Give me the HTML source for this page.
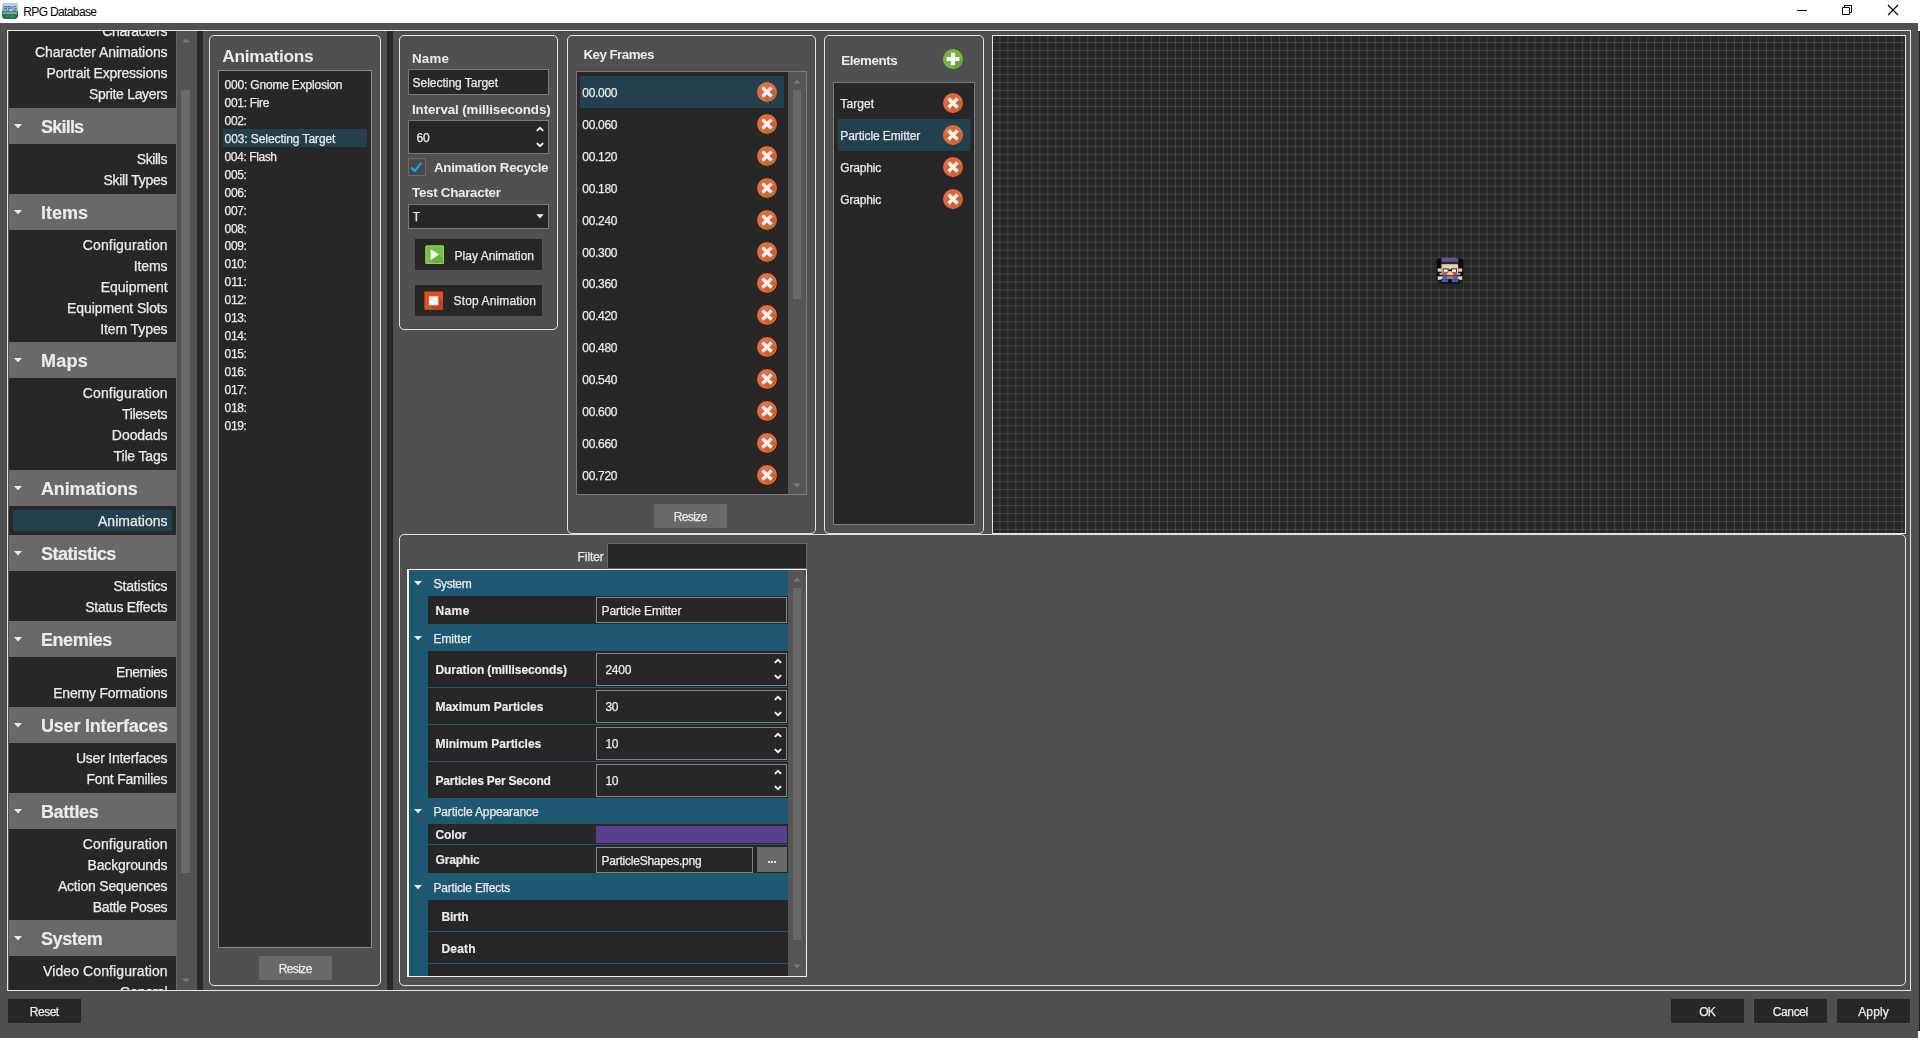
<!DOCTYPE html>
<html><head><meta charset="utf-8"><title>RPG Database</title>
<style>
html,body{margin:0;padding:0}
body{width:1920px;height:1038px;position:relative;overflow:hidden;background:#505050;font-family:"Liberation Sans",sans-serif;color:#f0f0f0}
div,svg{position:absolute}
svg{overflow:visible}
#app div{-webkit-text-stroke:0.25px}
</style></head><body>
<div style="left:0px;top:0px;width:1920px;height:23px;background:#fff"></div>
<div style="left:1918px;top:23px;width:2px;height:8px;background:#fff"></div>
<div style="left:1918px;top:31px;width:1px;height:1000px;background:#474747"></div>
<div style="left:1919px;top:31px;width:1px;height:1000px;background:#222"></div>
<div style="left:1918px;top:1031px;width:2px;height:7px;background:#fff"></div>
<svg style="left:2px;top:3px" width="16" height="16" viewBox="0 0 16 16">
<path d="M2 0H14L16 2V14L14 16H2L0 14V2Z" fill="#1c7a3c"/>
<path d="M2 0H14L16 2V8H0V2Z" fill="#a9d6d4"/>
<rect x="1" y="8.6" width="14" height="2.6" fill="#8a9aa8"/>
<rect x="4" y="12.6" width="3" height="1" fill="#5fa574"/><rect x="8.5" y="12.6" width="3.5" height="1" fill="#5fa574"/>
<text x="8" y="7.5" font-family="Liberation Sans, sans-serif" font-weight="bold" font-size="8" text-anchor="middle" fill="#5560c4" textLength="13.4" lengthAdjust="spacingAndGlyphs">RPG</text>
</svg>
<div style="top:5.74px;font-size:12px;line-height:12px;letter-spacing:-0.642px;color:#000;white-space:nowrap;left:23.30px;">RPG Database</div>
<svg style="left:1789px;top:0" width="128" height="23" viewBox="0 0 128 23">
<path d="M8 10.5H18" stroke="#000" stroke-width="1" fill="none"/>
<path d="M53.5 7.5H60.5V14.5H53.5Z M55.5 7.5V5.5H62.5V12.5H60.5" stroke="#000" stroke-width="1" fill="none"/>
<path d="M99 5L109 15M109 5L99 15" stroke="#000" stroke-width="1.1" fill="none"/>
</svg>
<div id="app" style="left:0;top:0;width:1920px;height:1038px;will-change:transform">
<div style="left:7px;top:30px;width:1904px;height:961px;border:1px solid #e4e4e4;box-sizing:border-box"></div>
<div style="left:9px;top:31px;width:167px;height:959px;background:#272727"></div>
<div style="left:176px;top:31px;width:21px;height:959px;background:#535353"></div>
<div style="left:176px;top:31px;width:1px;height:959px;background:#666"></div>
<div style="left:181px;top:90px;width:9px;height:783px;background:#696969"></div>
<svg style="left:182px;top:38px" width="8" height="5" viewBox="0 0 8 5"><path d="M0 4.5L4 0.5L8 4.5Z" fill="#777"/></svg>
<svg style="left:182px;top:978px" width="8" height="5" viewBox="0 0 8 5"><path d="M0 0.5L4 4.5L8 0.5Z" fill="#777"/></svg>
<div style="left:197px;top:31px;width:6px;height:959px;background:#292929"></div>
<div style="left:387px;top:31px;width:5.5px;height:959px;background:#292929"></div>
<div style="left:9px;top:31px;width:167px;height:959px;overflow:hidden">
<div style="left:0;top:77px;width:167px;height:36px;background:#696969"></div>
<svg style="left:5px;top:93px" width="8" height="5" viewBox="0 0 8 5"><path d="M0 0H8L4 4.4Z" fill="#ececec"/></svg>
<div style="left:0;top:163px;width:167px;height:36px;background:#696969"></div>
<svg style="left:5px;top:179px" width="8" height="5" viewBox="0 0 8 5"><path d="M0 0H8L4 4.4Z" fill="#ececec"/></svg>
<div style="left:0;top:311px;width:167px;height:36px;background:#696969"></div>
<svg style="left:5px;top:327px" width="8" height="5" viewBox="0 0 8 5"><path d="M0 0H8L4 4.4Z" fill="#ececec"/></svg>
<div style="left:0;top:439px;width:167px;height:36px;background:#696969"></div>
<svg style="left:5px;top:455px" width="8" height="5" viewBox="0 0 8 5"><path d="M0 0H8L4 4.4Z" fill="#ececec"/></svg>
<div style="left:0;top:504px;width:167px;height:36px;background:#696969"></div>
<svg style="left:5px;top:520px" width="8" height="5" viewBox="0 0 8 5"><path d="M0 0H8L4 4.4Z" fill="#ececec"/></svg>
<div style="left:0;top:590px;width:167px;height:36px;background:#696969"></div>
<svg style="left:5px;top:606px" width="8" height="5" viewBox="0 0 8 5"><path d="M0 0H8L4 4.4Z" fill="#ececec"/></svg>
<div style="left:0;top:676px;width:167px;height:36px;background:#696969"></div>
<svg style="left:5px;top:692px" width="8" height="5" viewBox="0 0 8 5"><path d="M0 0H8L4 4.4Z" fill="#ececec"/></svg>
<div style="left:0;top:762px;width:167px;height:36px;background:#696969"></div>
<svg style="left:5px;top:778px" width="8" height="5" viewBox="0 0 8 5"><path d="M0 0H8L4 4.4Z" fill="#ececec"/></svg>
<div style="left:0;top:889px;width:167px;height:36px;background:#696969"></div>
<svg style="left:5px;top:905px" width="8" height="5" viewBox="0 0 8 5"><path d="M0 0H8L4 4.4Z" fill="#ececec"/></svg>
<div style="left:4px;top:479px;width:159px;height:21px;background:#23404e"></div>
</div>
<div style="left:0;top:31px;width:1920px;height:959px;overflow:hidden"><div style="left:0;top:-31px;width:1920px;height:1038px">
<div style="top:24.25px;font-size:14px;line-height:14px;letter-spacing:-0.344px;color:#ececec;white-space:nowrap;right:1752.74px;">Characters</div>
<div style="top:45.25px;font-size:14px;line-height:14px;letter-spacing:-0.062px;color:#ececec;white-space:nowrap;right:1752.46px;">Character Animations</div>
<div style="top:66.15px;font-size:14px;line-height:14px;letter-spacing:-0.220px;color:#ececec;white-space:nowrap;right:1752.62px;">Portrait Expressions</div>
<div style="top:87.25px;font-size:14px;line-height:14px;letter-spacing:-0.314px;color:#ececec;white-space:nowrap;right:1752.71px;">Sprite Layers</div>
<div style="top:117.66px;font-size:18px;line-height:18px;letter-spacing:-0.779px;color:#ececec;white-space:nowrap;font-weight:bold;-webkit-text-stroke:0.15px;left:41.00px;">Skills</div>
<div style="top:151.85px;font-size:14px;line-height:14px;letter-spacing:-0.361px;color:#ececec;white-space:nowrap;right:1752.76px;">Skills</div>
<div style="top:172.95px;font-size:14px;line-height:14px;letter-spacing:-0.244px;color:#ececec;white-space:nowrap;right:1752.64px;">Skill Types</div>
<div style="top:203.66px;font-size:18px;line-height:18px;letter-spacing:-0.026px;color:#ececec;white-space:nowrap;font-weight:bold;-webkit-text-stroke:0.15px;left:41.00px;">Items</div>
<div style="top:237.95px;font-size:14px;line-height:14px;letter-spacing:0.127px;color:#ececec;white-space:nowrap;right:1752.27px;">Configuration</div>
<div style="top:258.85px;font-size:14px;line-height:14px;letter-spacing:-0.092px;color:#ececec;white-space:nowrap;right:1752.49px;">Items</div>
<div style="top:279.75px;font-size:14px;line-height:14px;letter-spacing:-0.009px;color:#ececec;white-space:nowrap;right:1752.41px;">Equipment</div>
<div style="top:300.65px;font-size:14px;line-height:14px;letter-spacing:-0.103px;color:#ececec;white-space:nowrap;right:1752.50px;">Equipment Slots</div>
<div style="top:321.55px;font-size:14px;line-height:14px;letter-spacing:-0.098px;color:#ececec;white-space:nowrap;right:1752.50px;">Item Types</div>
<div style="top:352.16px;font-size:18px;line-height:18px;letter-spacing:0.253px;color:#ececec;white-space:nowrap;font-weight:bold;-webkit-text-stroke:0.15px;left:41.00px;">Maps</div>
<div style="top:386.45px;font-size:14px;line-height:14px;letter-spacing:0.127px;color:#ececec;white-space:nowrap;right:1752.27px;">Configuration</div>
<div style="top:407.35px;font-size:14px;line-height:14px;letter-spacing:-0.292px;color:#ececec;white-space:nowrap;right:1752.69px;">Tilesets</div>
<div style="top:428.25px;font-size:14px;line-height:14px;letter-spacing:-0.042px;color:#ececec;white-space:nowrap;right:1752.44px;">Doodads</div>
<div style="top:449.15px;font-size:14px;line-height:14px;letter-spacing:-0.150px;color:#ececec;white-space:nowrap;right:1752.55px;">Tile Tags</div>
<div style="top:480.16px;font-size:18px;line-height:18px;letter-spacing:-0.125px;color:#ececec;white-space:nowrap;font-weight:bold;-webkit-text-stroke:0.15px;left:41.00px;">Animations</div>
<div style="top:514.25px;font-size:14px;line-height:14px;letter-spacing:0.042px;color:#ececec;white-space:nowrap;right:1752.36px;">Animations</div>
<div style="top:544.66px;font-size:18px;line-height:18px;letter-spacing:-0.517px;color:#ececec;white-space:nowrap;font-weight:bold;-webkit-text-stroke:0.15px;left:41.00px;">Statistics</div>
<div style="top:579.15px;font-size:14px;line-height:14px;letter-spacing:-0.210px;color:#ececec;white-space:nowrap;right:1752.61px;">Statistics</div>
<div style="top:600.05px;font-size:14px;line-height:14px;letter-spacing:-0.291px;color:#ececec;white-space:nowrap;right:1752.69px;">Status Effects</div>
<div style="top:631.06px;font-size:18px;line-height:18px;letter-spacing:-0.460px;color:#ececec;white-space:nowrap;font-weight:bold;-webkit-text-stroke:0.15px;left:41.00px;">Enemies</div>
<div style="top:665.05px;font-size:14px;line-height:14px;letter-spacing:-0.495px;color:#ececec;white-space:nowrap;right:1752.90px;">Enemies</div>
<div style="top:685.95px;font-size:14px;line-height:14px;letter-spacing:-0.207px;color:#ececec;white-space:nowrap;right:1752.61px;">Enemy Formations</div>
<div style="top:716.96px;font-size:18px;line-height:18px;letter-spacing:-0.212px;color:#ececec;white-space:nowrap;font-weight:bold;-webkit-text-stroke:0.15px;left:41.00px;">User Interfaces</div>
<div style="top:750.95px;font-size:14px;line-height:14px;letter-spacing:-0.236px;color:#ececec;white-space:nowrap;right:1752.64px;">User Interfaces</div>
<div style="top:771.85px;font-size:14px;line-height:14px;letter-spacing:-0.237px;color:#ececec;white-space:nowrap;right:1752.64px;">Font Families</div>
<div style="top:802.86px;font-size:18px;line-height:18px;letter-spacing:-0.386px;color:#ececec;white-space:nowrap;font-weight:bold;-webkit-text-stroke:0.15px;left:41.00px;">Battles</div>
<div style="top:836.85px;font-size:14px;line-height:14px;letter-spacing:0.127px;color:#ececec;white-space:nowrap;right:1752.27px;">Configuration</div>
<div style="top:857.75px;font-size:14px;line-height:14px;letter-spacing:-0.169px;color:#ececec;white-space:nowrap;right:1752.57px;">Backgrounds</div>
<div style="top:878.65px;font-size:14px;line-height:14px;letter-spacing:-0.214px;color:#ececec;white-space:nowrap;right:1752.61px;">Action Sequences</div>
<div style="top:899.55px;font-size:14px;line-height:14px;letter-spacing:-0.348px;color:#ececec;white-space:nowrap;right:1752.75px;">Battle Poses</div>
<div style="top:929.86px;font-size:18px;line-height:18px;letter-spacing:-0.439px;color:#ececec;white-space:nowrap;font-weight:bold;-webkit-text-stroke:0.15px;left:41.00px;">System</div>
<div style="top:964.05px;font-size:14px;line-height:14px;letter-spacing:0.101px;color:#ececec;white-space:nowrap;right:1752.30px;">Video Configuration</div>
<div style="top:984.95px;font-size:14px;line-height:14px;letter-spacing:-0.324px;color:#ececec;white-space:nowrap;right:1752.72px;">General</div>
</div></div>
<div style="left:209px;top:35px;width:172px;height:951px;border:1px solid #e4e4e4;border-radius:5px;box-sizing:border-box"></div>
<div style="top:48.23px;font-size:17.33px;line-height:17.33px;letter-spacing:-0.336px;color:#ececec;white-space:nowrap;font-weight:bold;-webkit-text-stroke:0;left:222.30px;">Animations</div>
<div style="left:218px;top:70px;width:154px;height:878px;background:#272727;border:1px solid #8a8a8a;box-sizing:border-box"></div>
<div style="left:223px;top:129px;width:144px;height:18px;background:#23404e"></div>
<div style="top:78.94px;font-size:12px;line-height:12px;letter-spacing:-0.191px;color:#ececec;white-space:nowrap;left:224.60px;">000: Gnome Explosion</div>
<div style="top:96.89px;font-size:12px;line-height:12px;letter-spacing:-0.317px;color:#ececec;white-space:nowrap;left:224.60px;">001: Fire</div>
<div style="top:114.84px;font-size:12px;line-height:12px;letter-spacing:-0.337px;color:#ececec;white-space:nowrap;left:224.60px;">002:</div>
<div style="top:132.79px;font-size:12px;line-height:12px;letter-spacing:-0.086px;color:#ececec;white-space:nowrap;left:224.60px;">003: Selecting Target</div>
<div style="top:150.74px;font-size:12px;line-height:12px;letter-spacing:-0.400px;color:#ececec;white-space:nowrap;left:224.60px;">004: Flash</div>
<div style="top:168.69px;font-size:12px;line-height:12px;letter-spacing:-0.337px;color:#ececec;white-space:nowrap;left:224.60px;">005:</div>
<div style="top:186.64px;font-size:12px;line-height:12px;letter-spacing:-0.337px;color:#ececec;white-space:nowrap;left:224.60px;">006:</div>
<div style="top:204.59px;font-size:12px;line-height:12px;letter-spacing:-0.337px;color:#ececec;white-space:nowrap;left:224.60px;">007:</div>
<div style="top:222.54px;font-size:12px;line-height:12px;letter-spacing:-0.337px;color:#ececec;white-space:nowrap;left:224.60px;">008:</div>
<div style="top:240.49px;font-size:12px;line-height:12px;letter-spacing:-0.337px;color:#ececec;white-space:nowrap;left:224.60px;">009:</div>
<div style="top:258.44px;font-size:12px;line-height:12px;letter-spacing:-0.337px;color:#ececec;white-space:nowrap;left:224.60px;">010:</div>
<div style="top:276.39px;font-size:12px;line-height:12px;letter-spacing:-0.114px;color:#ececec;white-space:nowrap;left:224.60px;">011:</div>
<div style="top:294.34px;font-size:12px;line-height:12px;letter-spacing:-0.337px;color:#ececec;white-space:nowrap;left:224.60px;">012:</div>
<div style="top:312.29px;font-size:12px;line-height:12px;letter-spacing:-0.337px;color:#ececec;white-space:nowrap;left:224.60px;">013:</div>
<div style="top:330.24px;font-size:12px;line-height:12px;letter-spacing:-0.337px;color:#ececec;white-space:nowrap;left:224.60px;">014:</div>
<div style="top:348.19px;font-size:12px;line-height:12px;letter-spacing:-0.337px;color:#ececec;white-space:nowrap;left:224.60px;">015:</div>
<div style="top:366.14px;font-size:12px;line-height:12px;letter-spacing:-0.337px;color:#ececec;white-space:nowrap;left:224.60px;">016:</div>
<div style="top:384.09px;font-size:12px;line-height:12px;letter-spacing:-0.337px;color:#ececec;white-space:nowrap;left:224.60px;">017:</div>
<div style="top:402.04px;font-size:12px;line-height:12px;letter-spacing:-0.337px;color:#ececec;white-space:nowrap;left:224.60px;">018:</div>
<div style="top:419.99px;font-size:12px;line-height:12px;letter-spacing:-0.337px;color:#ececec;white-space:nowrap;left:224.60px;">019:</div>
<div style="left:259px;top:956px;width:73px;height:24px;background:#696969"></div>
<div style="top:963.04px;font-size:12px;line-height:12px;letter-spacing:-0.587px;color:#ececec;white-space:nowrap;left:-4.50px;width:600px;text-align:center;text-indent:-0.587px;">Resize</div>
<div style="left:399px;top:35px;width:159px;height:295px;border:1px solid #e4e4e4;border-radius:5px;box-sizing:border-box"></div>
<div style="top:51.52px;font-size:13.33px;line-height:13.33px;letter-spacing:0.204px;color:#ececec;white-space:nowrap;font-weight:bold;-webkit-text-stroke:0;left:412.00px;">Name</div>
<div style="left:408px;top:69px;width:141px;height:26px;background:#272727;border:1px solid #7a7a7a;box-sizing:border-box"></div>
<div style="top:76.84px;font-size:12px;line-height:12px;letter-spacing:-0.026px;color:#ececec;white-space:nowrap;left:412.60px;">Selecting Target</div>
<div style="top:102.52px;font-size:13.33px;line-height:13.33px;letter-spacing:-0.093px;color:#ececec;white-space:nowrap;font-weight:bold;-webkit-text-stroke:0;left:412.00px;">Interval (milliseconds)</div>
<div style="left:408px;top:120px;width:141px;height:34px;background:#272727;border:1px solid #7a7a7a;box-sizing:border-box"></div>
<div style="top:131.64px;font-size:12px;line-height:12px;letter-spacing:-0.205px;color:#ececec;white-space:nowrap;left:416.60px;">60</div>
<svg style="left:535.8px;top:125.9px" width="8" height="6" viewBox="0 0 7.6 5.2"><path d="M0.8 4.4L3.8 1.4L6.8 4.4" stroke="#f4f4f4" stroke-width="1.8" fill="none"/></svg>
<svg style="left:535.8px;top:142.0px" width="8" height="6" viewBox="0 0 7.6 5.2"><path d="M0.8 0.8L3.8 3.8L6.8 0.8" stroke="#f4f4f4" stroke-width="1.8" fill="none"/></svg>
<div style="left:408px;top:158px;width:18px;height:18px;background:#484848;border:1px solid #6c6c6c;box-sizing:border-box"></div>
<svg style="left:408px;top:158px" width="18" height="18" viewBox="0 0 18 18"><path d="M3.2 9.4L6.9 12.9L13.4 4.6" stroke="#1ca3e3" stroke-width="2.1" fill="none"/></svg>
<div style="top:161.32px;font-size:13.33px;line-height:13.33px;letter-spacing:-0.300px;color:#ececec;white-space:nowrap;font-weight:bold;-webkit-text-stroke:0;left:434.00px;">Animation Recycle</div>
<div style="top:185.82px;font-size:13.33px;line-height:13.33px;letter-spacing:-0.264px;color:#ececec;white-space:nowrap;font-weight:bold;-webkit-text-stroke:0;left:412.00px;">Test Character</div>
<div style="left:408px;top:204px;width:141px;height:25px;background:#272727;border:1px solid #7a7a7a;box-sizing:border-box"></div>
<div style="top:211.44px;font-size:12px;line-height:12px;letter-spacing:-1.043px;color:#ececec;white-space:nowrap;left:412.70px;">T</div>
<svg style="left:536px;top:214px" width="8" height="5" viewBox="0 0 8 5"><path d="M0.3 0.3H7.7L4 4.6Z" fill="#f4f4f4"/></svg>
<div style="left:415px;top:239px;width:127px;height:31px;background:#272727"></div>
<svg style="left:425px;top:245px" width="20" height="20" viewBox="0 0 20 20">
<rect x="0.4" y="0.4" width="18.6" height="18.6" rx="1" fill="#7cbf43"/>
<path d="M5.6 3.8L14 9.6L19 14.5V19H9L5.6 15.2Z" fill="#6cab3a"/>
<rect x="0.9" y="0.9" width="17.6" height="17.6" rx="0.8" fill="none" stroke="#8ed055" stroke-width="1"/>
<path d="M5.6 3.9L14.1 9.6L5.6 15.2Z" fill="#f4f4f4"/></svg>
<div style="top:249.84px;font-size:12px;line-height:12px;letter-spacing:0.004px;color:#ececec;white-space:nowrap;left:454.60px;">Play Animation</div>
<div style="left:415px;top:285px;width:127px;height:31px;background:#272727"></div>
<svg style="left:424px;top:291px" width="20" height="20" viewBox="0 0 20 20">
<rect x="0.4" y="0.5" width="18.6" height="18.2" rx="1" fill="#e2511f"/>
<path d="M14.3 5.3L19 10V18.7H9.5L5 14.3Z" fill="#c8451a"/>
<rect x="5" y="5.3" width="9.3" height="9" fill="#f4f4f4"/></svg>
<div style="top:295.04px;font-size:12px;line-height:12px;letter-spacing:0.123px;color:#ececec;white-space:nowrap;left:453.60px;">Stop Animation</div>
<div style="left:567px;top:35px;width:249px;height:499px;border:1px solid #e4e4e4;border-radius:5px;box-sizing:border-box"></div>
<div style="top:47.52px;font-size:13.33px;line-height:13.33px;letter-spacing:-0.513px;color:#ececec;white-space:nowrap;font-weight:bold;-webkit-text-stroke:0;left:583.40px;">Key Frames</div>
<div style="left:576px;top:71px;width:231px;height:424px;background:#272727;border:1px solid #7a7a7a;box-sizing:border-box"></div>
<div style="left:788px;top:72px;width:18px;height:422px;background:#555"></div>
<div style="left:793px;top:90px;width:8px;height:209px;background:#696969"></div>
<svg style="left:793px;top:79px" width="8" height="5" viewBox="0 0 8 5"><path d="M0 4.5L4 0.5L8 4.5Z" fill="#777"/></svg>
<svg style="left:793px;top:483px" width="8" height="5" viewBox="0 0 8 5"><path d="M0 0.5L4 4.5L8 0.5Z" fill="#777"/></svg>
<div style="left:580px;top:76px;width:204px;height:32px;background:#23404e"></div>
<div style="top:86.94px;font-size:12px;line-height:12px;letter-spacing:-0.293px;color:#ececec;white-space:nowrap;left:582.30px;">00.000</div>
<svg style="left:757px;top:81.9px" width="20" height="20" viewBox="-10 -10 20 20">
<circle r="10" fill="#e1693b"/>
<path d="M-5.7 3.3L3.3 -5.7L9.4 0.4A10 10 0 0 1 0.4 9.4Z" fill="#cc6238"/>
<path d="M-4.5 -4.5L4.5 4.5M4.5 -4.5L-4.5 4.5" stroke="#f8f4f2" stroke-width="3.4"/></svg>
<div style="top:118.86px;font-size:12px;line-height:12px;letter-spacing:-0.293px;color:#ececec;white-space:nowrap;left:582.30px;">00.060</div>
<svg style="left:757px;top:113.82px" width="20" height="20" viewBox="-10 -10 20 20">
<circle r="10" fill="#e1693b"/>
<path d="M-5.7 3.3L3.3 -5.7L9.4 0.4A10 10 0 0 1 0.4 9.4Z" fill="#cc6238"/>
<path d="M-4.5 -4.5L4.5 4.5M4.5 -4.5L-4.5 4.5" stroke="#f8f4f2" stroke-width="3.4"/></svg>
<div style="top:150.78px;font-size:12px;line-height:12px;letter-spacing:-0.293px;color:#ececec;white-space:nowrap;left:582.30px;">00.120</div>
<svg style="left:757px;top:145.74px" width="20" height="20" viewBox="-10 -10 20 20">
<circle r="10" fill="#e1693b"/>
<path d="M-5.7 3.3L3.3 -5.7L9.4 0.4A10 10 0 0 1 0.4 9.4Z" fill="#cc6238"/>
<path d="M-4.5 -4.5L4.5 4.5M4.5 -4.5L-4.5 4.5" stroke="#f8f4f2" stroke-width="3.4"/></svg>
<div style="top:182.70px;font-size:12px;line-height:12px;letter-spacing:-0.293px;color:#ececec;white-space:nowrap;left:582.30px;">00.180</div>
<svg style="left:757px;top:177.66px" width="20" height="20" viewBox="-10 -10 20 20">
<circle r="10" fill="#e1693b"/>
<path d="M-5.7 3.3L3.3 -5.7L9.4 0.4A10 10 0 0 1 0.4 9.4Z" fill="#cc6238"/>
<path d="M-4.5 -4.5L4.5 4.5M4.5 -4.5L-4.5 4.5" stroke="#f8f4f2" stroke-width="3.4"/></svg>
<div style="top:214.62px;font-size:12px;line-height:12px;letter-spacing:-0.293px;color:#ececec;white-space:nowrap;left:582.30px;">00.240</div>
<svg style="left:757px;top:209.58px" width="20" height="20" viewBox="-10 -10 20 20">
<circle r="10" fill="#e1693b"/>
<path d="M-5.7 3.3L3.3 -5.7L9.4 0.4A10 10 0 0 1 0.4 9.4Z" fill="#cc6238"/>
<path d="M-4.5 -4.5L4.5 4.5M4.5 -4.5L-4.5 4.5" stroke="#f8f4f2" stroke-width="3.4"/></svg>
<div style="top:246.54px;font-size:12px;line-height:12px;letter-spacing:-0.293px;color:#ececec;white-space:nowrap;left:582.30px;">00.300</div>
<svg style="left:757px;top:241.5px" width="20" height="20" viewBox="-10 -10 20 20">
<circle r="10" fill="#e1693b"/>
<path d="M-5.7 3.3L3.3 -5.7L9.4 0.4A10 10 0 0 1 0.4 9.4Z" fill="#cc6238"/>
<path d="M-4.5 -4.5L4.5 4.5M4.5 -4.5L-4.5 4.5" stroke="#f8f4f2" stroke-width="3.4"/></svg>
<div style="top:278.46px;font-size:12px;line-height:12px;letter-spacing:-0.293px;color:#ececec;white-space:nowrap;left:582.30px;">00.360</div>
<svg style="left:757px;top:273.42px" width="20" height="20" viewBox="-10 -10 20 20">
<circle r="10" fill="#e1693b"/>
<path d="M-5.7 3.3L3.3 -5.7L9.4 0.4A10 10 0 0 1 0.4 9.4Z" fill="#cc6238"/>
<path d="M-4.5 -4.5L4.5 4.5M4.5 -4.5L-4.5 4.5" stroke="#f8f4f2" stroke-width="3.4"/></svg>
<div style="top:310.38px;font-size:12px;line-height:12px;letter-spacing:-0.293px;color:#ececec;white-space:nowrap;left:582.30px;">00.420</div>
<svg style="left:757px;top:305.34px" width="20" height="20" viewBox="-10 -10 20 20">
<circle r="10" fill="#e1693b"/>
<path d="M-5.7 3.3L3.3 -5.7L9.4 0.4A10 10 0 0 1 0.4 9.4Z" fill="#cc6238"/>
<path d="M-4.5 -4.5L4.5 4.5M4.5 -4.5L-4.5 4.5" stroke="#f8f4f2" stroke-width="3.4"/></svg>
<div style="top:342.30px;font-size:12px;line-height:12px;letter-spacing:-0.293px;color:#ececec;white-space:nowrap;left:582.30px;">00.480</div>
<svg style="left:757px;top:337.26px" width="20" height="20" viewBox="-10 -10 20 20">
<circle r="10" fill="#e1693b"/>
<path d="M-5.7 3.3L3.3 -5.7L9.4 0.4A10 10 0 0 1 0.4 9.4Z" fill="#cc6238"/>
<path d="M-4.5 -4.5L4.5 4.5M4.5 -4.5L-4.5 4.5" stroke="#f8f4f2" stroke-width="3.4"/></svg>
<div style="top:374.22px;font-size:12px;line-height:12px;letter-spacing:-0.293px;color:#ececec;white-space:nowrap;left:582.30px;">00.540</div>
<svg style="left:757px;top:369.18px" width="20" height="20" viewBox="-10 -10 20 20">
<circle r="10" fill="#e1693b"/>
<path d="M-5.7 3.3L3.3 -5.7L9.4 0.4A10 10 0 0 1 0.4 9.4Z" fill="#cc6238"/>
<path d="M-4.5 -4.5L4.5 4.5M4.5 -4.5L-4.5 4.5" stroke="#f8f4f2" stroke-width="3.4"/></svg>
<div style="top:406.14px;font-size:12px;line-height:12px;letter-spacing:-0.293px;color:#ececec;white-space:nowrap;left:582.30px;">00.600</div>
<svg style="left:757px;top:401.1px" width="20" height="20" viewBox="-10 -10 20 20">
<circle r="10" fill="#e1693b"/>
<path d="M-5.7 3.3L3.3 -5.7L9.4 0.4A10 10 0 0 1 0.4 9.4Z" fill="#cc6238"/>
<path d="M-4.5 -4.5L4.5 4.5M4.5 -4.5L-4.5 4.5" stroke="#f8f4f2" stroke-width="3.4"/></svg>
<div style="top:438.06px;font-size:12px;line-height:12px;letter-spacing:-0.293px;color:#ececec;white-space:nowrap;left:582.30px;">00.660</div>
<svg style="left:757px;top:433.02px" width="20" height="20" viewBox="-10 -10 20 20">
<circle r="10" fill="#e1693b"/>
<path d="M-5.7 3.3L3.3 -5.7L9.4 0.4A10 10 0 0 1 0.4 9.4Z" fill="#cc6238"/>
<path d="M-4.5 -4.5L4.5 4.5M4.5 -4.5L-4.5 4.5" stroke="#f8f4f2" stroke-width="3.4"/></svg>
<div style="top:469.98px;font-size:12px;line-height:12px;letter-spacing:-0.293px;color:#ececec;white-space:nowrap;left:582.30px;">00.720</div>
<svg style="left:757px;top:464.94px" width="20" height="20" viewBox="-10 -10 20 20">
<circle r="10" fill="#e1693b"/>
<path d="M-5.7 3.3L3.3 -5.7L9.4 0.4A10 10 0 0 1 0.4 9.4Z" fill="#cc6238"/>
<path d="M-4.5 -4.5L4.5 4.5M4.5 -4.5L-4.5 4.5" stroke="#f8f4f2" stroke-width="3.4"/></svg>
<div style="left:654px;top:504px;width:73px;height:24px;background:#696969"></div>
<div style="top:511.04px;font-size:12px;line-height:12px;letter-spacing:-0.587px;color:#ececec;white-space:nowrap;left:390.50px;width:600px;text-align:center;text-indent:-0.587px;">Resize</div>
<div style="left:824px;top:35px;width:160px;height:499px;border:1px solid #e4e4e4;border-radius:5px;box-sizing:border-box"></div>
<div style="top:53.52px;font-size:13.33px;line-height:13.33px;letter-spacing:-0.409px;color:#ececec;white-space:nowrap;font-weight:bold;-webkit-text-stroke:0;left:841.30px;">Elements</div>
<svg style="left:943px;top:49px" width="20" height="20" viewBox="-10 -10 20 20">
<circle r="10" fill="#76b83f"/>
<path d="M-2 6.2L2 6.2L2 2L6.4 2L6.4 -2L9.8 1.4A10 10 0 0 1 1.6 9.8Z" fill="#67a638"/>
<path d="M-6.4 0H6.4M0 -6.2V6.2" stroke="#f8f6f6" stroke-width="4"/></svg>
<div style="left:833px;top:82px;width:142px;height:443px;background:#272727;border:1px solid #7a7a7a;box-sizing:border-box"></div>
<div style="left:838px;top:119px;width:132px;height:32px;background:#23404e"></div>
<div style="top:98.24px;font-size:12px;line-height:12px;letter-spacing:0.101px;color:#ececec;white-space:nowrap;left:840.30px;">Target</div>
<svg style="left:943px;top:93px" width="20" height="20" viewBox="-10 -10 20 20">
<circle r="10" fill="#e1693b"/>
<path d="M-5.7 3.3L3.3 -5.7L9.4 0.4A10 10 0 0 1 0.4 9.4Z" fill="#cc6238"/>
<path d="M-4.5 -4.5L4.5 4.5M4.5 -4.5L-4.5 4.5" stroke="#f8f4f2" stroke-width="3.4"/></svg>
<div style="top:130.24px;font-size:12px;line-height:12px;letter-spacing:-0.094px;color:#ececec;white-space:nowrap;left:840.30px;">Particle Emitter</div>
<svg style="left:943px;top:125px" width="20" height="20" viewBox="-10 -10 20 20">
<circle r="10" fill="#e1693b"/>
<path d="M-5.7 3.3L3.3 -5.7L9.4 0.4A10 10 0 0 1 0.4 9.4Z" fill="#cc6238"/>
<path d="M-4.5 -4.5L4.5 4.5M4.5 -4.5L-4.5 4.5" stroke="#f8f4f2" stroke-width="3.4"/></svg>
<div style="top:162.24px;font-size:12px;line-height:12px;letter-spacing:-0.175px;color:#ececec;white-space:nowrap;left:840.30px;">Graphic</div>
<svg style="left:943px;top:157px" width="20" height="20" viewBox="-10 -10 20 20">
<circle r="10" fill="#e1693b"/>
<path d="M-5.7 3.3L3.3 -5.7L9.4 0.4A10 10 0 0 1 0.4 9.4Z" fill="#cc6238"/>
<path d="M-4.5 -4.5L4.5 4.5M4.5 -4.5L-4.5 4.5" stroke="#f8f4f2" stroke-width="3.4"/></svg>
<div style="top:194.24px;font-size:12px;line-height:12px;letter-spacing:-0.175px;color:#ececec;white-space:nowrap;left:840.30px;">Graphic</div>
<svg style="left:943px;top:189px" width="20" height="20" viewBox="-10 -10 20 20">
<circle r="10" fill="#e1693b"/>
<path d="M-5.7 3.3L3.3 -5.7L9.4 0.4A10 10 0 0 1 0.4 9.4Z" fill="#cc6238"/>
<path d="M-4.5 -4.5L4.5 4.5M4.5 -4.5L-4.5 4.5" stroke="#f8f4f2" stroke-width="3.4"/></svg>
<div style="left:992px;top:35px;width:914px;height:499px;box-sizing:border-box;border:1px solid #e8e8e8;background-color:#272727;
background-image:linear-gradient(to right,rgba(255,255,255,.13) 1px,transparent 1px),linear-gradient(to bottom,rgba(255,255,255,.13) 1px,transparent 1px);
background-size:7.984375px 7.984375px;background-position:6.4px 6px"></div>
<div style="left:1438px;top:258px;width:25px;height:29px;background:#252525"></div>
<svg style="left:1436px;top:257px;filter:blur(0.45px)" width="28" height="28" viewBox="0 0 28 28"><rect x="6" y="0.6" width="14.5" height="1.4" fill="#6a4a88"/><rect x="4.9" y="1.6" width="18" height="2.2" fill="#6b5590"/><rect x="4.9" y="3.6" width="18" height="1.8" fill="#4a5080"/><rect x="4.9" y="5.2" width="18" height="2.0" fill="#1f2548"/><rect x="0.6" y="2.6" width="4.9" height="15.6" fill="#0a0a0e"/><rect x="22.2" y="2.6" width="5.3" height="15.6" fill="#0a0a0e"/><rect x="2.2" y="1.4" width="3" height="1.6" fill="#0f0f14"/><rect x="22.6" y="1.4" width="3" height="1.6" fill="#0f0f14"/><rect x="5.5" y="7.2" width="16.6" height="11" fill="#f5cfa6"/><rect x="1.7" y="11.4" width="4.1" height="3.3" fill="#f2c6a0"/><rect x="22.2" y="11.4" width="4.0" height="3.3" fill="#f2c6a0"/><rect x="6.6" y="11.4" width="6.0" height="4.2" fill="#2a2e3a"/><rect x="15.0" y="11.4" width="6.0" height="4.2" fill="#2a2e3a"/><rect x="12.5" y="12.4" width="3.6" height="1.9" fill="#050505"/><rect x="7.6" y="12.4" width="4.1" height="2.5" fill="#f4f4f0"/><rect x="16.0" y="12.4" width="4.1" height="2.5" fill="#f4f4f0"/><rect x="12.2" y="14.4" width="3.8" height="4.0" fill="#e8c8a8"/><rect x="6.2" y="15.4" width="4.9" height="2.9" fill="#d2541c"/><rect x="17.0" y="15.4" width="4.3" height="2.9" fill="#d2541c"/><rect x="3.5" y="16.0" width="2.2" height="2.3" fill="#78b8e8"/><rect x="22.2" y="16.0" width="2.2" height="2.3" fill="#78b8e8"/><rect x="0.8" y="18.2" width="26.6" height="5.2" fill="#0a0a0e"/><rect x="6.5" y="18.3" width="15.0" height="4.4" fill="#3c66b0"/><rect x="1.7" y="19.3" width="4.8" height="3.6" fill="#f8c898"/><rect x="21.6" y="19.3" width="4.7" height="3.6" fill="#f8c898"/><rect x="10.8" y="19.0" width="6.5" height="3.6" fill="#e0601e"/><rect x="4.8" y="22.2" width="18.6" height="4.3" fill="#0a0a0e"/><rect x="5.8" y="22.2" width="6.3" height="3.0" fill="#2a62e0"/><rect x="15.7" y="22.2" width="6.5" height="3.0" fill="#2a62e0"/></svg>
<div style="left:399px;top:534px;width:1507px;height:452px;border:1px solid #e4e4e4;border-radius:5px;box-sizing:border-box"></div>
<div style="top:551.04px;font-size:12px;line-height:12px;letter-spacing:-0.081px;color:#ececec;white-space:nowrap;left:577.60px;">Filter</div>
<div style="left:607px;top:543px;width:200px;height:26px;background:#272727;border:1px solid #666;box-sizing:border-box"></div>
<div style="left:407px;top:569px;width:400px;height:408px;background:#1f5872;border:1px solid #f0f0f0;border-left-width:2px;box-sizing:border-box"></div>
<div style="left:788px;top:570px;width:18px;height:406px;background:#555"></div>
<div style="left:793px;top:588px;width:8px;height:352px;background:#696969"></div>
<svg style="left:793px;top:577px" width="8" height="5" viewBox="0 0 8 5"><path d="M0 4.5L4 0.5L8 4.5Z" fill="#777"/></svg>
<svg style="left:793px;top:964px" width="8" height="5" viewBox="0 0 8 5"><path d="M0 0.5L4 4.5L8 0.5Z" fill="#777"/></svg>
<svg style="left:414.4px;top:580.9px" width="8" height="5" viewBox="0 0 8 5"><path d="M0 0H8L4 4.3Z" fill="#f0f0f0"/></svg>
<div style="top:578.34px;font-size:12px;line-height:12px;letter-spacing:-0.351px;color:#ececec;white-space:nowrap;left:433.40px;">System</div>
<div style="left:428px;top:596px;width:360px;height:28px;background:#272727"></div>
<div style="top:605.14px;font-size:12px;line-height:12px;letter-spacing:0.381px;color:#ececec;white-space:nowrap;font-weight:bold;-webkit-text-stroke:0.15px;left:435.50px;">Name</div>
<div style="left:596px;top:597px;width:191px;height:26px;background:#272727;border:1px solid #858585;box-sizing:border-box"></div>
<div style="top:605.34px;font-size:12px;line-height:12px;letter-spacing:-0.094px;color:#ececec;white-space:nowrap;left:601.50px;">Particle Emitter</div>
<svg style="left:414.4px;top:635.9px" width="8" height="5" viewBox="0 0 8 5"><path d="M0 0H8L4 4.3Z" fill="#f0f0f0"/></svg>
<div style="top:633.34px;font-size:12px;line-height:12px;letter-spacing:-0.019px;color:#ececec;white-space:nowrap;left:433.40px;">Emitter</div>
<div style="left:428px;top:651px;width:360px;height:36px;background:#272727"></div>
<div style="top:664.14px;font-size:12px;line-height:12px;letter-spacing:-0.088px;color:#ececec;white-space:nowrap;font-weight:bold;-webkit-text-stroke:0.15px;left:435.50px;">Duration (milliseconds)</div>
<div style="left:596px;top:652.5px;width:191px;height:33px;background:#272727;border:1px solid #858585;box-sizing:border-box"></div>
<div style="top:664.34px;font-size:12px;line-height:12px;letter-spacing:-0.205px;color:#ececec;white-space:nowrap;left:605.40px;">2400</div>
<svg style="left:773.6px;top:658.4px" width="8" height="6" viewBox="0 0 7.6 5.2"><path d="M0.8 4.4L3.8 1.4L6.8 4.4" stroke="#f4f4f4" stroke-width="1.8" fill="none"/></svg>
<svg style="left:773.6px;top:673.6px" width="8" height="6" viewBox="0 0 7.6 5.2"><path d="M0.8 0.8L3.8 3.8L6.8 0.8" stroke="#f4f4f4" stroke-width="1.8" fill="none"/></svg>
<div style="left:428px;top:688px;width:360px;height:36px;background:#272727"></div>
<div style="top:701.14px;font-size:12px;line-height:12px;letter-spacing:-0.056px;color:#ececec;white-space:nowrap;font-weight:bold;-webkit-text-stroke:0.15px;left:435.50px;">Maximum Particles</div>
<div style="left:596px;top:689.5px;width:191px;height:33px;background:#272727;border:1px solid #858585;box-sizing:border-box"></div>
<div style="top:701.34px;font-size:12px;line-height:12px;letter-spacing:-0.205px;color:#ececec;white-space:nowrap;left:605.40px;">30</div>
<svg style="left:773.6px;top:695.4px" width="8" height="6" viewBox="0 0 7.6 5.2"><path d="M0.8 4.4L3.8 1.4L6.8 4.4" stroke="#f4f4f4" stroke-width="1.8" fill="none"/></svg>
<svg style="left:773.6px;top:710.6px" width="8" height="6" viewBox="0 0 7.6 5.2"><path d="M0.8 0.8L3.8 3.8L6.8 0.8" stroke="#f4f4f4" stroke-width="1.8" fill="none"/></svg>
<div style="left:428px;top:725px;width:360px;height:36px;background:#272727"></div>
<div style="top:738.14px;font-size:12px;line-height:12px;letter-spacing:-0.020px;color:#ececec;white-space:nowrap;font-weight:bold;-webkit-text-stroke:0.15px;left:435.50px;">Minimum Particles</div>
<div style="left:596px;top:726.5px;width:191px;height:33px;background:#272727;border:1px solid #858585;box-sizing:border-box"></div>
<div style="top:738.34px;font-size:12px;line-height:12px;letter-spacing:-0.205px;color:#ececec;white-space:nowrap;left:605.40px;">10</div>
<svg style="left:773.6px;top:732.4px" width="8" height="6" viewBox="0 0 7.6 5.2"><path d="M0.8 4.4L3.8 1.4L6.8 4.4" stroke="#f4f4f4" stroke-width="1.8" fill="none"/></svg>
<svg style="left:773.6px;top:747.6px" width="8" height="6" viewBox="0 0 7.6 5.2"><path d="M0.8 0.8L3.8 3.8L6.8 0.8" stroke="#f4f4f4" stroke-width="1.8" fill="none"/></svg>
<div style="left:428px;top:762px;width:360px;height:36px;background:#272727"></div>
<div style="top:775.14px;font-size:12px;line-height:12px;letter-spacing:-0.214px;color:#ececec;white-space:nowrap;font-weight:bold;-webkit-text-stroke:0.15px;left:435.50px;">Particles Per Second</div>
<div style="left:596px;top:763.5px;width:191px;height:33px;background:#272727;border:1px solid #858585;box-sizing:border-box"></div>
<div style="top:775.34px;font-size:12px;line-height:12px;letter-spacing:-0.205px;color:#ececec;white-space:nowrap;left:605.40px;">10</div>
<svg style="left:773.6px;top:769.4px" width="8" height="6" viewBox="0 0 7.6 5.2"><path d="M0.8 4.4L3.8 1.4L6.8 4.4" stroke="#f4f4f4" stroke-width="1.8" fill="none"/></svg>
<svg style="left:773.6px;top:784.6px" width="8" height="6" viewBox="0 0 7.6 5.2"><path d="M0.8 0.8L3.8 3.8L6.8 0.8" stroke="#f4f4f4" stroke-width="1.8" fill="none"/></svg>
<svg style="left:414.4px;top:808.9px" width="8" height="5" viewBox="0 0 8 5"><path d="M0 0H8L4 4.3Z" fill="#f0f0f0"/></svg>
<div style="top:806.34px;font-size:12px;line-height:12px;letter-spacing:-0.122px;color:#ececec;white-space:nowrap;left:433.40px;">Particle Appearance</div>
<div style="left:428px;top:824px;width:360px;height:20px;background:#272727"></div>
<div style="top:829.14px;font-size:12px;line-height:12px;letter-spacing:-0.095px;color:#ececec;white-space:nowrap;font-weight:bold;-webkit-text-stroke:0.15px;left:435.50px;">Color</div>
<div style="left:596px;top:826px;width:191px;height:17px;background:#5b3f8f"></div>
<div style="left:428px;top:845px;width:360px;height:28px;background:#272727"></div>
<div style="top:854.14px;font-size:12px;line-height:12px;letter-spacing:-0.184px;color:#ececec;white-space:nowrap;font-weight:bold;-webkit-text-stroke:0.15px;left:435.50px;">Graphic</div>
<div style="left:596px;top:846.5px;width:157px;height:26px;background:#272727;border:1px solid #858585;box-sizing:border-box"></div>
<div style="top:854.74px;font-size:12px;line-height:12px;letter-spacing:-0.234px;color:#ececec;white-space:nowrap;left:601.50px;">ParticleShapes.png</div>
<div style="left:757px;top:847px;width:30px;height:25px;background:#696969"></div>
<div style="top:853.34px;font-size:12px;line-height:12px;letter-spacing:-0.524px;color:#ececec;white-space:nowrap;font-weight:bold;-webkit-text-stroke:0.15px;left:472.00px;width:600px;text-align:center;text-indent:-0.524px;">...</div>
<svg style="left:414.4px;top:884.9px" width="8" height="5" viewBox="0 0 8 5"><path d="M0 0H8L4 4.3Z" fill="#f0f0f0"/></svg>
<div style="top:882.34px;font-size:12px;line-height:12px;letter-spacing:-0.204px;color:#ececec;white-space:nowrap;left:433.40px;">Particle Effects</div>
<div style="left:428px;top:900px;width:360px;height:31px;background:#272727"></div>
<div style="top:910.64px;font-size:12px;line-height:12px;letter-spacing:-0.243px;color:#ececec;white-space:nowrap;font-weight:bold;-webkit-text-stroke:0.15px;left:441.50px;">Birth</div>
<div style="left:428px;top:932px;width:360px;height:31px;background:#272727"></div>
<div style="top:942.64px;font-size:12px;line-height:12px;letter-spacing:0.166px;color:#ececec;white-space:nowrap;font-weight:bold;-webkit-text-stroke:0.15px;left:441.50px;">Death</div>
<div style="left:428px;top:964px;width:360px;height:12px;background:#272727"></div>
<div style="left:8px;top:999px;width:73px;height:24px;background:#272727"></div>
<div style="top:1006.04px;font-size:12px;line-height:12px;letter-spacing:-0.492px;color:#ececec;white-space:nowrap;left:-255.50px;width:600px;text-align:center;text-indent:-0.492px;">Reset</div>
<div style="left:1671px;top:999px;width:73px;height:24px;background:#272727"></div>
<div style="top:1006.04px;font-size:12px;line-height:12px;letter-spacing:-0.668px;color:#ececec;white-space:nowrap;left:1407.50px;width:600px;text-align:center;text-indent:-0.668px;">OK</div>
<div style="left:1754px;top:999px;width:73px;height:24px;background:#272727"></div>
<div style="top:1006.04px;font-size:12px;line-height:12px;letter-spacing:-0.386px;color:#ececec;white-space:nowrap;left:1490.50px;width:600px;text-align:center;text-indent:-0.386px;">Cancel</div>
<div style="left:1837px;top:999px;width:73px;height:24px;background:#272727"></div>
<div style="top:1006.04px;font-size:12px;line-height:12px;letter-spacing:0.104px;color:#ececec;white-space:nowrap;left:1573.50px;width:600px;text-align:center;text-indent:0.104px;">Apply</div>
</div>
</body></html>
